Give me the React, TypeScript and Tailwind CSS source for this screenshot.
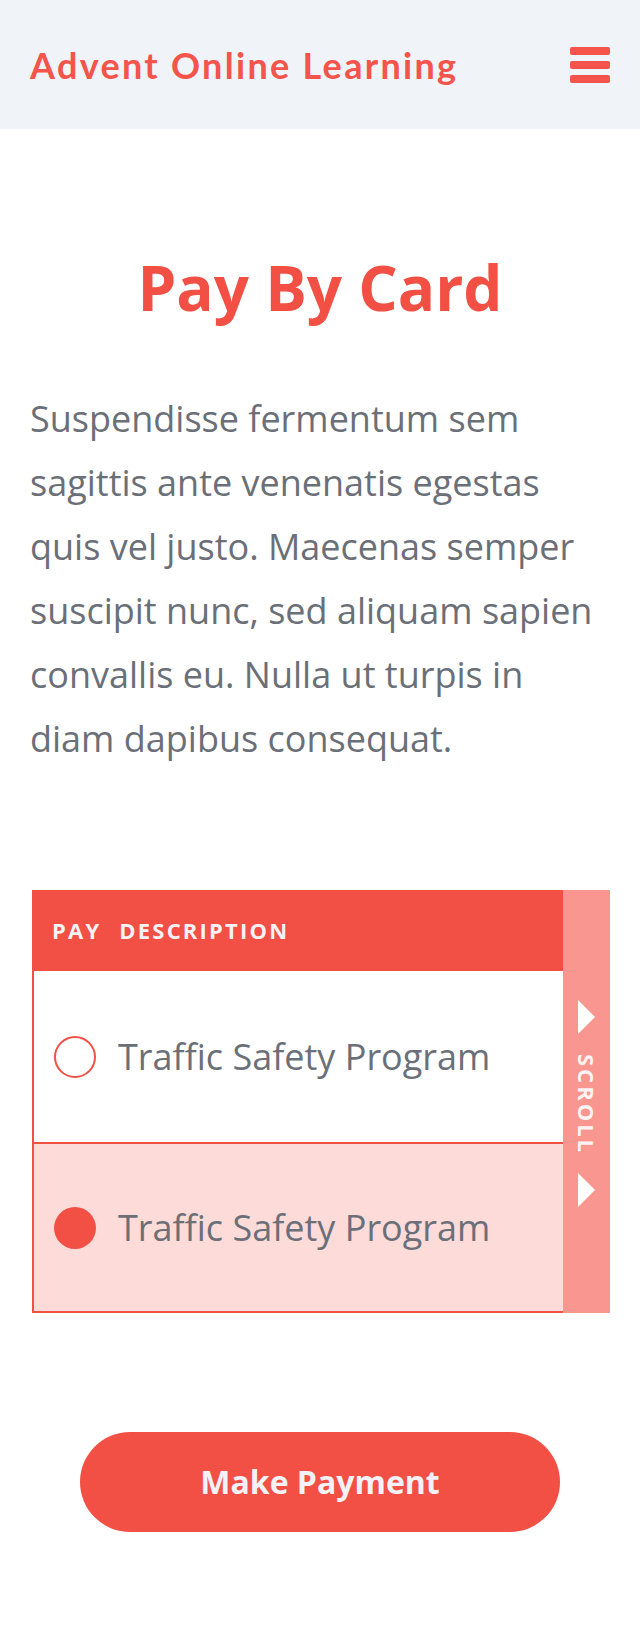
import React from "react";

function Triangle() {
  return (
    <svg width="17" height="34" viewBox="0 0 17 34" className="block">
      <polygon points="0,0 17,17 0,34" fill="#ffffff" />
    </svg>
  );
}

export default function App() {
  return (
    <div className="min-h-[1646px] bg-white" style={{ fontFamily: '"Open Sans", sans-serif' }}>
      <header className="h-[129px] bg-[#f0f3f8] flex items-center justify-between pl-[30px] pr-[30px]">
        <div
          className="text-[36px] font-bold text-[#f4544a] tracking-[2.3px]"
          style={{ fontFamily: 'Lato, "Open Sans", sans-serif' }}
        >
          Advent Online Learning
        </div>
        <div className="flex flex-col gap-[6px] w-[40px]">
          <span className="block h-[8px] rounded-[2px] bg-[#f4544a]" />
          <span className="block h-[8px] rounded-[2px] bg-[#f4544a]" />
          <span className="block h-[8px] rounded-[2px] bg-[#f4544a]" />
        </div>
      </header>

      <main className="px-[30px]">
        <h1 className="mt-[122px] text-center text-[62px] leading-[72px] font-bold text-[#f25045]">
          Pay By Card
        </h1>
        <p className="mt-[64px] text-[36px] leading-[64px] text-[#6b6f78]">
          Suspendisse fermentum sem sagittis ante venenatis egestas quis vel justo. Maecenas semper suscipit nunc, sed aliquam sapien convallis eu. Nulla ut turpis in diam dapibus consequat.
        </p>

        <div className="mt-[119px] ml-[2px] flex">
          <div className="flex-1">
            <div className="h-[81px] bg-[#f25045] flex items-center pl-[20px] gap-[18px] text-[22px] font-bold tracking-[2.2px] text-[#f6f2f6]">
              <span>PAY</span>
              <span>DESCRIPTION</span>
            </div>
            <div className="h-[171px] border-l-2 border-[#f25045] bg-white flex items-center pl-[20px]">
              <span className="w-[42px] h-[42px] rounded-full border-2 border-[#f25045] shrink-0" />
              <span className="ml-[22px] text-[36px] text-[#6b6f78]">Traffic Safety Program</span>
            </div>
            <div className="h-[171px] border-l-2 border-t-2 border-b-2 border-[#f25045] bg-[#fddbd9] flex items-center pl-[20px]">
              <span className="w-[42px] h-[42px] rounded-full bg-[#f25045] shrink-0" />
              <span className="ml-[22px] text-[36px] text-[#6b6f78]">Traffic Safety Program</span>
            </div>
          </div>
          <div className="w-[47px] bg-[#f8968f] flex flex-col items-center pt-[110px]">
            <Triangle />
            <span
              className="mt-[20px] text-[22px] font-bold tracking-[3px] text-[#fdf3f3]"
              style={{ writingMode: "vertical-rl" }}
            >
              SCROLL
            </span>
            <div className="mt-[18px]">
              <Triangle />
            </div>
          </div>
        </div>

        <div className="mt-[119px] flex justify-center">
          <button className="w-[480px] h-[100px] rounded-full bg-[#f25045] text-[32px] font-bold text-[#f4f1f7]">
            Make Payment
          </button>
        </div>
      </main>
    </div>
  );
}
